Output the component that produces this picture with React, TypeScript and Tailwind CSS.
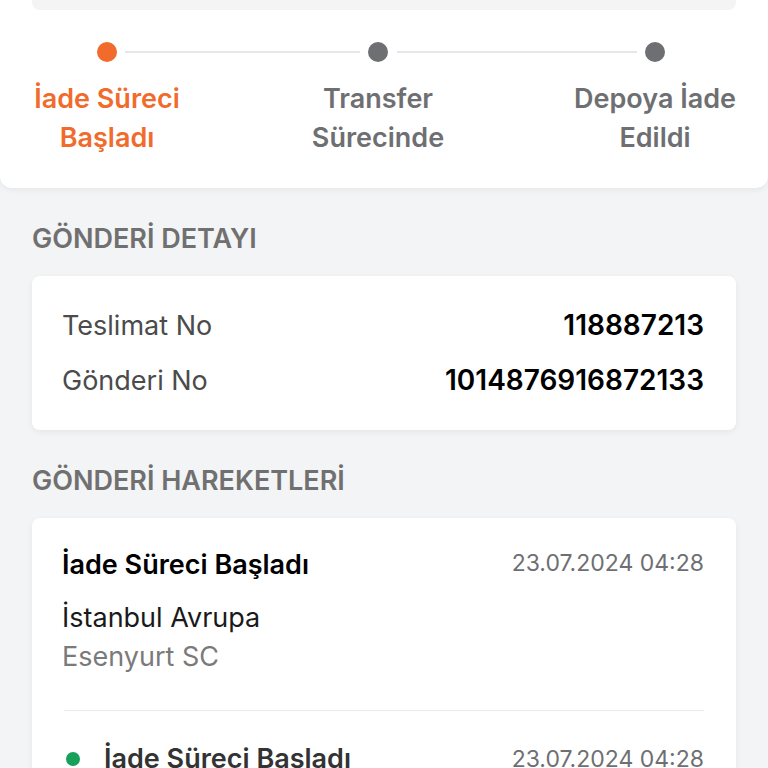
import React from 'react';

const steps = [
  { label: ['İade Süreci', 'Başladı'], active: true },
  { label: ['Transfer', 'Sürecinde'], active: false },
  { label: ['Depoya İade', 'Edildi'], active: false },
];

const App: React.FC = () => {
  return (
    <div
      className="w-full min-h-screen bg-[#f3f4f6] overflow-hidden"
      style={{ fontFamily: 'Inter, "Noto Sans", sans-serif' }}
    >
      {/* Status stepper */}
      <div className="bg-white rounded-b-xl shadow-[0_2px_6px_rgba(0,0,0,0.06)] h-[188px]">
        <div className="mx-8 h-[10px] bg-[#f4f4f5] rounded-b-lg"></div>
        <div className="relative mt-[32px] h-[20px]">
          <div className="absolute top-[9px] left-[125px] w-[235px] h-[2px] bg-[#e5e7eb]"></div>
          <div className="absolute top-[9px] left-[397px] w-[240px] h-[2px] bg-[#e5e7eb]"></div>
          <div className="absolute left-[97px] top-0 w-5 h-5 rounded-full bg-[#f06b2c]"></div>
          <div className="absolute left-[368px] top-0 w-5 h-5 rounded-full bg-[#6e6f73]"></div>
          <div className="absolute left-[645px] top-0 w-5 h-5 rounded-full bg-[#6e6f73]"></div>
        </div>
        <div className="relative mt-[17px] h-[80px]">
          {steps.map((s, i) => (
            <div
              key={i}
              className={`absolute top-0 w-[230px] -translate-x-1/2 text-center text-[27px] leading-[39px] font-semibold ${
                s.active ? 'text-[#f06b2c]' : 'text-[#6e6f73]'
              } ${i === 0 ? 'left-[107px]' : i === 1 ? 'left-[378px]' : 'left-[655px]'}`}
            >
              <div>{s.label[0]}</div>
              <div>{s.label[1]}</div>
            </div>
          ))}
        </div>
      </div>

      <div className="px-8">
        <h2 className="mt-[35px] text-[27px] leading-[32px] font-semibold text-[#707070]">GÖNDERİ DETAYI</h2>
        <div className="mt-[21px] bg-white rounded-lg shadow-[0_2px_6px_rgba(0,0,0,0.06)] pl-[30px] pr-8 py-[30px] flex flex-col gap-4">
          <div className="flex justify-between items-center text-[27px] leading-[39px]">
            <span className="text-[#4b4b4b]">Teslimat No</span>
            <span className="text-[28px] font-semibold text-black">118887213</span>
          </div>
          <div className="flex justify-between items-center text-[27px] leading-[39px]">
            <span className="text-[#4b4b4b]">Gönderi No</span>
            <span className="text-[28px] font-semibold text-black">1014876916872133</span>
          </div>
        </div>

        <h2 className="mt-[35px] text-[27px] leading-[32px] font-semibold text-[#707070]">GÖNDERİ HAREKETLERİ</h2>
        <div className="mt-[21px] bg-white rounded-lg shadow-[0_2px_6px_rgba(0,0,0,0.06)] pl-[30px] pr-8 pt-[27px]">
          <div className="flex justify-between items-start">
            <span className="text-[27px] leading-[39px] font-semibold text-black">İade Süreci Başladı</span>
            <span className="text-[23px] leading-[36px] text-[#6e6f73]">23.07.2024 04:28</span>
          </div>
          <div className="mt-[14px] text-[27px] leading-[39px] text-[#1a1a1a]">İstanbul Avrupa</div>
          <div className="text-[27px] leading-[39px] text-[#7a7a7a]">Esenyurt SC</div>
          <div className="mt-[34px] ml-[2px] h-px bg-[#ececec]"></div>
          <div className="mt-[28px] flex justify-between items-center">
            <div className="flex items-center gap-[24px] pl-[4px]">
              <span className="w-[14px] h-[14px] rounded-full bg-[#16a05a]"></span>
              <span className="text-[27px] leading-[39px] font-semibold text-[#333]">İade Süreci Başladı</span>
            </div>
            <span className="text-[23px] leading-[36px] text-[#6e6f73]">23.07.2024 04:28</span>
          </div>
          <div className="h-[80px]"></div>
        </div>
      </div>
    </div>
  );
};

export default App;
